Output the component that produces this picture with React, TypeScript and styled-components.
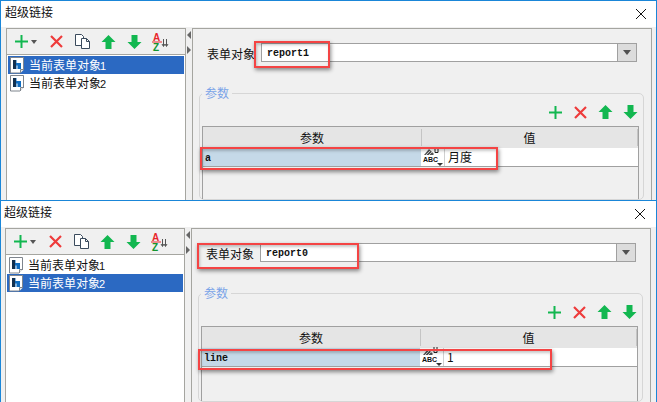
import React from "react";
import styled, { createGlobalStyle } from "styled-components";

const GlobalStyle = createGlobalStyle`
  * { box-sizing: border-box; }
  html, body { margin: 0; padding: 0; background: #fff; }
  body { font-family: "Noto Sans CJK SC", "Liberation Sans", sans-serif; font-size: 12px; color: #111; }
`;

const Page = styled.div`
  width: 657px;
  height: 402px;
  overflow: hidden;
  display: flex;
  flex-direction: column;
`;

const Dialog = styled.div<{ $height: number }>`
  position: relative;
  height: ${(p) => p.$height}px;
  flex: none;
  display: flex;
  flex-direction: column;
  overflow: hidden;
  background: #fff;
  border-top: 1px solid #1a86d8;
  border-left: 1px solid #1a86d8;
  border-right: 1px solid #1a86d8;
`;

const TitleBar = styled.div<{ $shift: number }>`
  flex: none;
  height: 26px;
  display: flex;
  align-items: center;
  justify-content: space-between;
  padding: 0 ${(p) => 9 + p.$shift}px 4px ${(p) => 4 - p.$shift}px;
  font-size: 12px;
  line-height: 16px;
`;

const CloseIcon = styled.svg`
  width: 12px;
  height: 12px;
  display: block;
  margin-top: 3px;
`;

const Body = styled.div<{ $shift: number }>`
  flex: 1;
  min-height: 0;
  display: flex;
  background: #f0f0f0;
  padding: 1px ${(p) => 3 + p.$shift}px 0 ${(p) => 5 - p.$shift}px;
`;

const LeftPanel = styled.div`
  width: 180px;
  flex: none;
  display: flex;
  flex-direction: column;
  border: 1px solid #a5a5a0;
  border-bottom: none;
`;

const Toolbar = styled.div`
  flex: none;
  height: 26px;
  display: flex;
  align-items: center;
  padding-left: 7px;
  border-bottom: 1px solid #a5a5a0;
`;

const ToolButton = styled.span<{ $width?: number; $start?: boolean }>`
  flex: none;
  width: ${(p) => p.$width ?? 26}px;
  height: 20px;
  display: flex;
  align-items: center;
  justify-content: ${(p) => (p.$start ? "flex-start" : "center")};
`;

const List = styled.div`
  flex: 1;
  background: #fff;
  padding: 1px 0 0 1px;
`;

const ListRow = styled.div<{ $selected?: boolean }>`
  height: 18px;
  margin-right: 1px;
  display: flex;
  align-items: center;
  gap: 4px;
  padding-left: 2px;
  font-size: 12px;
  line-height: 18px;
  white-space: nowrap;
  background: ${(p) => (p.$selected ? "#2b69c2" : "transparent")};
  color: ${(p) => (p.$selected ? "#fff" : "#111")};
`;

const ListNumber = styled.span`
  font-family: "Liberation Sans", sans-serif;
  font-size: 11px;
  margin-left: -1px;
`;

const Splitter = styled.div`
  width: 6px;
  flex: none;
  display: flex;
  flex-direction: column;
  align-items: center;
  gap: 7px;
  padding-top: 3px;
`;

const SplitArrow = styled.span<{ $dir: "left" | "right" }>`
  width: 0;
  height: 0;
  border-top: 4px solid transparent;
  border-bottom: 4px solid transparent;
  ${(p) =>
    p.$dir === "left"
      ? "border-right: 4px solid #666;"
      : "border-left: 4px solid #666;"}
`;

const RightPanel = styled.div`
  flex: 1;
  min-width: 0;
  display: flex;
  flex-direction: column;
  border: 1px solid #a5a5a0;
  border-bottom: none;
  padding: 14px 7px 0 6px;
  margin-right: 1px;
`;

const FormRow = styled.div`
  flex: none;
  display: flex;
  align-items: center;
  height: 19px;
  margin-right: 7px;
  padding-left: 8px;
`;

const FormLabel = styled.span`
  width: 54px;
  flex: none;
  font-size: 12px;
  line-height: 19px;
  padding-top: 2px;
`;

const ComboInput = styled.div`
  flex: 1;
  height: 19px;
  background: #fff;
  border: 1px solid #a0a0a0;
  display: flex;
  align-items: center;
  padding: 2px 0 0 5px;
`;

const MonoText = styled.span`
  font-family: "Liberation Mono", monospace;
  font-weight: 700;
  font-size: 10px;
  line-height: 12px;
  color: #111;
`;

const ComboButton = styled.div`
  width: 20px;
  height: 19px;
  flex: none;
  margin-left: -1px;
  background: #dcdcdc;
  border: 1px solid #a0a0a0;
  display: flex;
  align-items: center;
  justify-content: center;
  &::after {
    content: "";
    border-left: 4px solid transparent;
    border-right: 4px solid transparent;
    border-top: 5px solid #505050;
  }
`;

const ParamSet = styled.fieldset`
  flex: 1;
  min-height: 0;
  margin: 23px 0 0 0;
  padding: 0 0 0 2px;
  border: 1px solid #d6d6d6;
  border-radius: 5px;
  min-width: 0;
  display: flex;
  flex-direction: column;
`;

const ParamLegend = styled.legend`
  margin-left: 0;
  padding: 0 3px;
  font-size: 12px;
  line-height: 16px;
  color: #7aa4e8;
`;

const ParamTools = styled.div`
  flex: none;
  height: 26px;
  margin-top: -2px;
  display: flex;
  justify-content: flex-end;
  align-items: center;
`;

const ParamTool = styled.span`
  width: 25px;
  height: 20px;
  flex: none;
  display: flex;
  align-items: center;
  justify-content: center;
`;

const Table = styled.div`
  flex: 1;
  margin: 1px 4px 0 0;
  display: flex;
  flex-direction: column;
  border: 1px solid #a0a0a0;
  border-bottom: none;
`;

const HeaderRow = styled.div`
  flex: none;
  height: 21px;
  display: grid;
  grid-template-columns: 219px 1fr;
  background: #e5e5e5;
`;

const HeaderCell = styled.div`
  display: flex;
  align-items: center;
  justify-content: center;
  font-size: 12px;
  border-right: 1px solid #c4c4c4;
  margin: 2px 0;
`;

const DataRow = styled.div`
  flex: none;
  height: 19px;
  display: grid;
  grid-template-columns: 218px 24px 1fr;
  border-bottom: 1px solid #a0a0a0;
  background: #fff;
`;

const NameCell = styled.div`
  background: #c5d9e8;
  padding: 3px 0 0 2px;
  display: flex;
  align-items: center;
`;

const TypeCell = styled.div`
  position: relative;
  display: flex;
  flex-direction: column;
  align-items: flex-start;
  padding-left: 2px;
  border-right: 1px solid #d0d0d0;
`;

const TypeText = styled.span`
  font-family: "Liberation Sans", sans-serif;
  font-weight: 700;
  font-size: 7px;
  line-height: 8px;
  color: #111;
`;

const TypeCaret = styled.span`
  position: absolute;
  right: 1px;
  bottom: 0;
  border-left: 3px solid transparent;
  border-right: 3px solid transparent;
  border-top: 3px solid #333;
`;

const ValueCell = styled.div`
  display: flex;
  align-items: center;
  padding-left: 3px;
  font-size: 12px;
  line-height: 18px;
`;

const Annotation = styled.div<{ $x: number; $y: number; $w: number; $h: number }>`
  position: absolute;
  left: ${(p) => p.$x}px;
  top: ${(p) => p.$y}px;
  width: ${(p) => p.$w}px;
  height: ${(p) => p.$h}px;
  border: 2px solid #f44444;
  box-shadow: 1px 2px 4px rgba(0, 0, 0, 0.45), inset 1px 2px 3px rgba(0, 0, 0, 0.22);
  pointer-events: none;
`;

const Caret = styled.span`
  border-left: 3.5px solid transparent;
  border-right: 3.5px solid transparent;
  border-top: 4px solid #555;
  margin-left: 2px;
`;

const GREEN = "#12b750";
const RED = "#ee3b3b";

const PlusIcon = () => (
  <svg width="15" height="15" viewBox="0 0 15 15">
    <path d="M7.5 1v13M1 7.5h13" stroke={GREEN} strokeWidth="2" fill="none" />
  </svg>
);

const CrossIcon = () => (
  <svg width="15" height="15" viewBox="0 0 15 15">
    <path d="M2 2l11 11M13 2L2 13" stroke={RED} strokeWidth="2.2" fill="none" />
  </svg>
);

const UpIcon = () => (
  <svg width="15" height="16" viewBox="0 0 15 16">
    <path d="M7.5 1L14.5 8H10.5V15H4.5V8H.5z" fill={GREEN} />
  </svg>
);

const DownIcon = () => (
  <svg width="15" height="16" viewBox="0 0 15 16">
    <path d="M7.5 15L14.5 8H10.5V1H4.5V8H.5z" fill={GREEN} />
  </svg>
);

const CopyIcon = () => (
  <svg width="17" height="17" viewBox="0 0 17 17">
    <path d="M1.5 1.5h6l2 2v9h-8z" fill="#fff" stroke="#3a4a5c" />
    <path d="M7.5 5.5h5l3 3v7h-8z" fill="#fff" stroke="#3a4a5c" />
    <path d="M12.5 5.5v3h3" fill="none" stroke="#3a4a5c" />
  </svg>
);

const SortIcon = () => (
  <svg width="17" height="18" viewBox="0 0 17 18">
    <text x="1" y="8" fontFamily="Liberation Sans" fontWeight="700" fontSize="10" fill="#e8262a">A</text>
    <path d="M0 9h10" stroke="#e8262a" strokeWidth="1" />
    <text x="1" y="17.500" fontFamily="Liberation Sans" fontWeight="700" fontSize="10" fill="#14952f">Z</text>
    <path d="M11.500 6v7M10 11l1.500 2.500L13 11M14.500 6v7M13 11l1.500 2.500L16 11" stroke="#555" strokeWidth="1" fill="none" />
  </svg>
);

const DocIcon = () => (
  <svg width="15" height="17" viewBox="0 0 15 17" style={{ flex: "none" }}>
    <path d="M.5.5h13v12l-3.500 3.500H.5z" fill="#fff" stroke="#7f858d" />
    <path d="M3 3h3.500v3H11v6H7.500V8.500h-1V12H3z" fill="#0f6cc0" />
    <path d="M3 3h3v9H3z" fill="#12304f" />
    <path d="M10.500 16v-3.500H14" fill="#e6e6e6" stroke="#7f858d" />
  </svg>
);

const PencilIcon = () => (
  <svg width="17" height="9" viewBox="0 0 17 9" style={{ display: "block", flex: "none", marginTop: -1 }}>
    <path d="M1 8l5-6 5 5-1 1H1z" fill="#555" />
    <path d="M3 8l4-4M6 8l3-3" fill="none" stroke="#fff" strokeWidth="0.7" />
    <path d="M12 0v5.500h3V0" fill="none" stroke="#222" strokeWidth="1" />
  </svg>
);

type DialogData = {
  height: number;
  shift: number;
  selected: number;
  report: string;
  param: string;
  value: string;
  marks: { x: number; y: number; w: number; h: number }[];
};

const dialogs: DialogData[] = [
  {
    height: 200,
    shift: 0,
    selected: 0,
    report: "report1",
    param: "a",
    value: "月度",
    marks: [
      { x: 253, y: 40, w: 76, h: 27 },
      { x: 199, y: 146, w: 298, h: 23 },
    ],
  },
  {
    height: 202,
    shift: 1,
    selected: 1,
    report: "report0",
    param: "line",
    value: "1",
    marks: [
      { x: 196, y: 42, w: 162, h: 26 },
      { x: 197, y: 148, w: 354, h: 21 },
    ],
  },
];

const HyperlinkDialog = ({ data }: { data: DialogData }) => (
  <Dialog $height={data.height}>
    <TitleBar $shift={data.shift}>
      <span>超级链接</span>
      <CloseIcon viewBox="0 0 12 12">
        <path d="M1 1l10 10M11 1L1 11" stroke="#111" strokeWidth="1" fill="none" />
      </CloseIcon>
    </TitleBar>
    <Body $shift={data.shift}>
      <LeftPanel>
        <Toolbar>
          <ToolButton $width={29} $start>
            <PlusIcon />
            <Caret />
          </ToolButton>
          <ToolButton><CrossIcon /></ToolButton>
          <ToolButton><CopyIcon /></ToolButton>
          <ToolButton><UpIcon /></ToolButton>
          <ToolButton><DownIcon /></ToolButton>
          <ToolButton><SortIcon /></ToolButton>
        </Toolbar>
        <List>
          {["1", "2"].map((n, i) => (
            <ListRow key={n} $selected={i === data.selected}>
              <DocIcon />
              <span>
                当前表单对象<ListNumber>{n}</ListNumber>
              </span>
            </ListRow>
          ))}
        </List>
      </LeftPanel>
      <Splitter>
        <SplitArrow $dir="left" />
        <SplitArrow $dir="right" />
      </Splitter>
      <RightPanel>
        <FormRow>
          <FormLabel>表单对象</FormLabel>
          <ComboInput>
            <MonoText>{data.report}</MonoText>
          </ComboInput>
          <ComboButton />
        </FormRow>
        <ParamSet>
          <ParamLegend>参数</ParamLegend>
          <ParamTools>
            <ParamTool><PlusIcon /></ParamTool>
            <ParamTool><CrossIcon /></ParamTool>
            <ParamTool><UpIcon /></ParamTool>
            <ParamTool><DownIcon /></ParamTool>
          </ParamTools>
          <Table>
            <HeaderRow>
              <HeaderCell>参数</HeaderCell>
              <HeaderCell>值</HeaderCell>
            </HeaderRow>
            <DataRow>
              <NameCell>
                <MonoText>{data.param}</MonoText>
              </NameCell>
              <TypeCell>
                <PencilIcon />
                <TypeText>ABC</TypeText>
                <TypeCaret />
              </TypeCell>
              <ValueCell>{data.value}</ValueCell>
            </DataRow>
          </Table>
        </ParamSet>
      </RightPanel>
    </Body>
    {data.marks.map((m) => (
      <Annotation key={m.x} $x={m.x} $y={m.y} $w={m.w} $h={m.h} />
    ))}
  </Dialog>
);

const App = () => (
  <Page>
    <GlobalStyle />
    {dialogs.map((d) => (
      <HyperlinkDialog key={d.report} data={d} />
    ))}
  </Page>
);

export default App;
